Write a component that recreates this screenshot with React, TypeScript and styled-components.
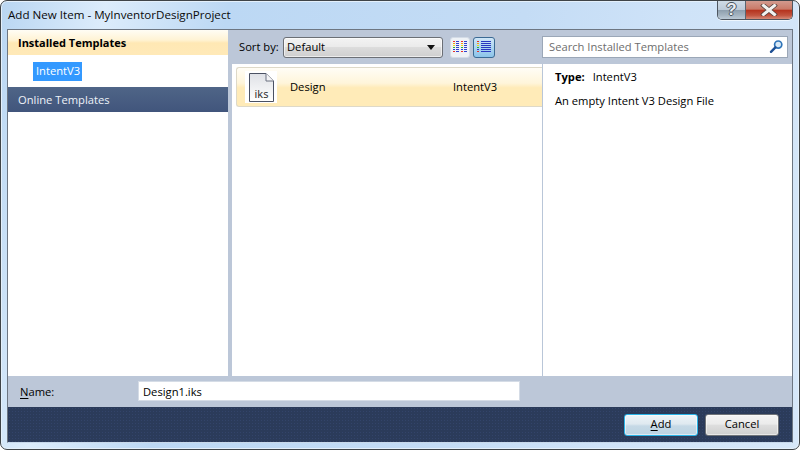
import React from "react";
import styled, { createGlobalStyle } from "styled-components";

const Global = createGlobalStyle`
  html, body { margin: 0; padding: 0; width: 800px; height: 450px; overflow: hidden; background: #fff; }
  * { box-sizing: border-box; }
`;

const Win = styled.div`
  width: 800px; height: 450px;
  display: flex; flex-direction: column;
  padding: 0 6px 6px 6px;
  border: 1px solid #3f4448;
  border-radius: 7px;
  background: linear-gradient(100deg, #b9d6f2 0%, #dcecfb 12%, #bcd8f4 26%, #c4dcf5 60%, #cfe3f8 78%, #d6e7f9 100%);
  font-family: "Open Sans", "Noto Sans", sans-serif;
  font-size: 11.2px;
  color: #000;
  box-shadow: inset 0 0 0 1px #e4f0fb;
`;
const TitleBar = styled.div`
  height: 28px; flex: none;
  display: flex; justify-content: space-between; align-items: flex-start;
`;
const TitleText = styled.div`
  padding: 5px 0 0 1px; font-size: 11.6px; line-height: 17px; color: #0a0a0a;
`;
const Caption = styled.div`
  display: flex; height: 19px;
  border: 1px solid #4e5660; border-top: none; border-radius: 0 0 5px 5px; overflow: hidden;
  box-shadow: 0 1px 0 #eef6fd;
`;
const CapBtn = styled.div<{ $w: number; $close?: boolean }>`
  width: ${p => p.$w}px;
  display: flex; align-items: center; justify-content: center;
  font-family: "Liberation Sans", sans-serif; font-weight: 700; font-size: 17px;
  color: #e8edf2;
  text-shadow: -1px 0 0 #4a5560, 1px 0 0 #4a5560, 0 -1px 0 #4a5560, 0 1px 0 #4a5560;
  background: ${p => p.$close
    ? "linear-gradient(#d29a8e 0%, #c97a68 45%, #b5341f 52%, #c2543f 80%, #d58a77 100%)"
    : "linear-gradient(#cfdbe6 0%, #bccad8 48%, #8e9fae 52%, #a6b5c2 80%, #bccad6 100%)"};
  border-right: ${p => p.$close ? "none" : "1px solid #5a6570"};
`;
const Content = styled.div`
  flex: 1; display: flex; flex-direction: column;
  border: 1px solid #6d7682; border-bottom: 1px solid #c7d8ea;
  min-height: 0;
`;
const Main = styled.div`
  height: 346px; flex: none; display: flex; background: #bcc7d8;
`;
const LeftPanel = styled.div`
  width: 220px; flex: none; background: #fff; display: flex; flex-direction: column;
`;
const InstalledHeader = styled.div`
  height: 25px; flex: none; display: flex; align-items: center; padding: 0 0 1px 10px;
  font-weight: 700; font-size: 11px;
  background: linear-gradient(#fffdf5 0%, #fff3d4 40%, #ffe8b4 52%, #ffe9b8 100%);
`;
const TreeRow = styled.div`
  height: 32px; flex: none; padding: 7px 0 0 25px;
`;
const Selected = styled.span`
  display: inline-block; width: 49px; height: 19px; line-height: 17px; padding: 0 3px;
  background: #3399ff; color: #fff; font-size: 11.2px;
`;
const OnlineHeader = styled.div`
  height: 25px; flex: none; display: flex; align-items: center; padding: 0 0 0 10px;
  color: #eef2f8; font-size: 11.2px;
  background: linear-gradient(#4f6587 0%, #41557c 100%);
`;
const Centre = styled.div`
  flex: 1; display: flex; flex-direction: column; margin-left: 4px; min-width: 0;
`;
const Toolbar = styled.div`
  height: 34px; flex: none; display: flex; align-items: center; padding-left: 7px;
`;
const SortLabel = styled.span`
  width: 44px; flex: none; padding-bottom: 2px;
`;
const Select = styled.div`
  width: 160px; height: 21px; flex: none;
  border: 1px solid #6b6f75; border-radius: 3px;
  background: linear-gradient(#f3f3f3 0%, #ebebeb 45%, #dcdcdc 50%, #cfcfcf 100%);
  display: flex; align-items: center; justify-content: space-between; padding: 0 5px 2px 3px;
  box-shadow: inset 0 0 0 1px rgba(255,255,255,.6);
`;
const Arrow = styled.span`
  width: 0; height: 0; border-left: 4px solid transparent; border-right: 4px solid transparent;
  border-top: 5px solid #111; margin: 2px 2px 0 0;
`;
const ViewBtn = styled.div<{ $on?: boolean }>`
  width: ${p => p.$on ? 22 : 20}px; height: 21px; flex: none;
  margin-left: ${p => p.$on ? 3 : 7}px;
  display: flex; align-items: center; justify-content: center;
  border-radius: 3px;
  border: 1px solid ${p => p.$on ? "#3b6a94" : "#d3dbe6"};
  background: ${p => p.$on ? "linear-gradient(#cfe6f7, #8cc4ea)" : "#eef2f6"};
`;
const Search = styled.div`
  margin-left: auto; width: 246px; height: 22px; margin-right: 4px; flex: none;
  border: 1px solid #9ba7b7; background: #fff;
  display: flex; align-items: center; justify-content: space-between; padding: 0 3px 2px 6px;
  color: #6d6d6d;
`;
const Columns = styled.div`
  flex: 1; display: flex; min-height: 0;
`;
const ListPane = styled.div`
  width: 310px; flex: none; background: #fff; padding: 3px 0 0 4px;
`;
const ItemRow = styled.div`
  height: 40px; display: flex; align-items: center;
  border: 1px solid #ded9c8; border-right: none; border-radius: 3px 0 0 3px;
  background: linear-gradient(#fffdf6 0%, #fff5da 40%, #ffebb8 52%, #ffebb8 100%);
`;
const IconCell = styled.div`
  width: 32px; height: 32px; margin-left: 8px; flex: none; background: #fff;
  display: flex; align-items: center; justify-content: center;
`;
const ItemName = styled.span`
  margin-left: 13px; width: 163px; flex: none; padding-bottom: 2px;
`;
const ItemType = styled.span`
  padding-bottom: 2px;
`;
const Info = styled.div`
  flex: 1; background: #fff; border-left: 1px solid #b9c6d8; padding: 4px 12px;
`;
const InfoLine = styled.div`
  line-height: 17px; margin-bottom: 7px; white-space: nowrap;
`;
const Bold = styled.b`
  margin-right: 5px;
`;
const NameRow = styled.div`
  height: 31px; flex: none; display: flex; align-items: center; background: #bcc7d8; padding-left: 12px;
`;
const NameLabel = styled.span`
  width: 118px; flex: none; padding-bottom: 1px;
`;
const Underlined = styled.u`
  text-decoration: underline; text-underline-offset: 2px;
`;
const NameInput = styled.div`
  width: 382px; height: 20px; background: #fff; border: 1px solid #d5dce6;
  display: flex; align-items: center; padding: 0 0 0 4px; margin-top: -1px;
`;
const Footer = styled.div`
  flex: 1; display: flex; justify-content: flex-end; align-items: flex-start; padding: 7px 13px 0 0; gap: 7px;
  background-color: #2b3b5a;
  background-image: radial-gradient(#33446a 0.7px, transparent 0.8px);
  background-size: 3px 3px;
`;
const Btn = styled.div<{ $primary?: boolean }>`
  width: 74px; height: 22px; display: flex; align-items: center; justify-content: center;
  border-radius: 3px; padding-bottom: 3px;
  border: 1px solid ${p => p.$primary ? "#2ab4e8" : "#6f7378"};
  background: ${p => p.$primary
    ? "linear-gradient(#eef4f8 0%, #dfe9f0 45%, #c6d9e6 55%, #bcd3e2 100%)"
    : "linear-gradient(#f3f3f3 0%, #ebebeb 45%, #dddddd 52%, #cfcfcf 100%)"};
  box-shadow: inset 0 0 0 1px rgba(255,255,255,.5);
`;

const colours = ["#e8302a", "#f5a010", "#ecd810", "#2cb040", "#2c3cd0", "#e8302a"];

const GridIcon = () => (
  <svg width="16" height="15" viewBox="0 0 16 15">
    {[0, 8].map(x => colours.map((c, i) => (
      <g key={`${x}-${i}`}>
        <rect x={x + 1} y={1 + i * 2} width="2" height="1" fill={c} />
        <rect x={x + 4} y={1 + i * 2} width="3" height="1" fill="#2f40d0" />
      </g>
    )))}
  </svg>
);
const ListIcon = () => (
  <svg width="16" height="15" viewBox="0 0 16 15">
    {colours.map((c, i) => (
      <g key={i}>
        <rect x={1} y={1 + i * 2} width="2" height="1" fill={c} />
        <rect x={5} y={1 + i * 2} width="10" height="1" fill="#2a38c0" />
      </g>
    ))}
  </svg>
);
const SearchIcon = () => (
  <svg width="15" height="15" viewBox="0 0 15 15">
    <circle cx="9.2" cy="5.6" r="3.6" fill="#d8e9f7" stroke="#2f74b8" strokeWidth="1.7" />
    <path d="M6.4 8.4 L2 12.8" stroke="#1d4f94" strokeWidth="2.4" strokeLinecap="round" />
  </svg>
);
const CloseIcon = () => (
  <svg width="18" height="12" viewBox="0 0 18 12">
    <path d="M3.5 1.5 L14.5 10.5 M14.5 1.5 L3.5 10.5" stroke="#55403c" strokeWidth="4.6" strokeLinecap="square" />
    <path d="M3.5 1.5 L14.5 10.5 M14.5 1.5 L3.5 10.5" stroke="#f2f2f0" strokeWidth="3" strokeLinecap="square" />
  </svg>
);
const FileIcon = () => (
  <svg width="27" height="31" viewBox="0 0 27 31">
    <defs>
      <linearGradient id="fileFill" x1="0" y1="0" x2="0" y2="1">
        <stop offset="0" stopColor="#dfe1e6" />
        <stop offset="1" stopColor="#ffffff" />
      </linearGradient>
    </defs>
    <path d="M1.5 1.5 H18 L25.5 9 V29.5 H1.5 Z" fill="url(#fileFill)" stroke="#4b5162" />
    <path d="M18 1.5 V9 H25.5" fill="#f4f4f6" stroke="#6a7080" />
    <text x="13.5" y="26" textAnchor="middle" fontFamily="'Open Sans', sans-serif" fontSize="11" fill="#222">iks</text>
  </svg>
);

export default function App() {
  return (
    <Win>
      <Global />
      <TitleBar>
        <TitleText>Add New Item - MyInventorDesignProject</TitleText>
        <Caption>
          <CapBtn $w={28}>?</CapBtn>
          <CapBtn $w={46} $close><CloseIcon /></CapBtn>
        </Caption>
      </TitleBar>
      <Content>
        <Main>
          <LeftPanel>
            <InstalledHeader>Installed Templates</InstalledHeader>
            <TreeRow><Selected>IntentV3</Selected></TreeRow>
            <OnlineHeader>Online Templates</OnlineHeader>
          </LeftPanel>
          <Centre>
            <Toolbar>
              <SortLabel>Sort by:</SortLabel>
              <Select>Default<Arrow /></Select>
              <ViewBtn><GridIcon /></ViewBtn>
              <ViewBtn $on><ListIcon /></ViewBtn>
              <Search>Search Installed Templates<SearchIcon /></Search>
            </Toolbar>
            <Columns>
              <ListPane>
                <ItemRow>
                  <IconCell><FileIcon /></IconCell>
                  <ItemName>Design</ItemName>
                  <ItemType>IntentV3</ItemType>
                </ItemRow>
              </ListPane>
              <Info>
                <InfoLine><Bold>Type:</Bold> IntentV3</InfoLine>
                <InfoLine>An empty Intent V3 Design File</InfoLine>
              </Info>
            </Columns>
          </Centre>
        </Main>
        <NameRow>
          <NameLabel><Underlined>N</Underlined>ame:</NameLabel>
          <NameInput>Design1.iks</NameInput>
        </NameRow>
        <Footer>
          <Btn $primary><span><Underlined>A</Underlined>dd</span></Btn>
          <Btn>Cancel</Btn>
        </Footer>
      </Content>
    </Win>
  );
}
